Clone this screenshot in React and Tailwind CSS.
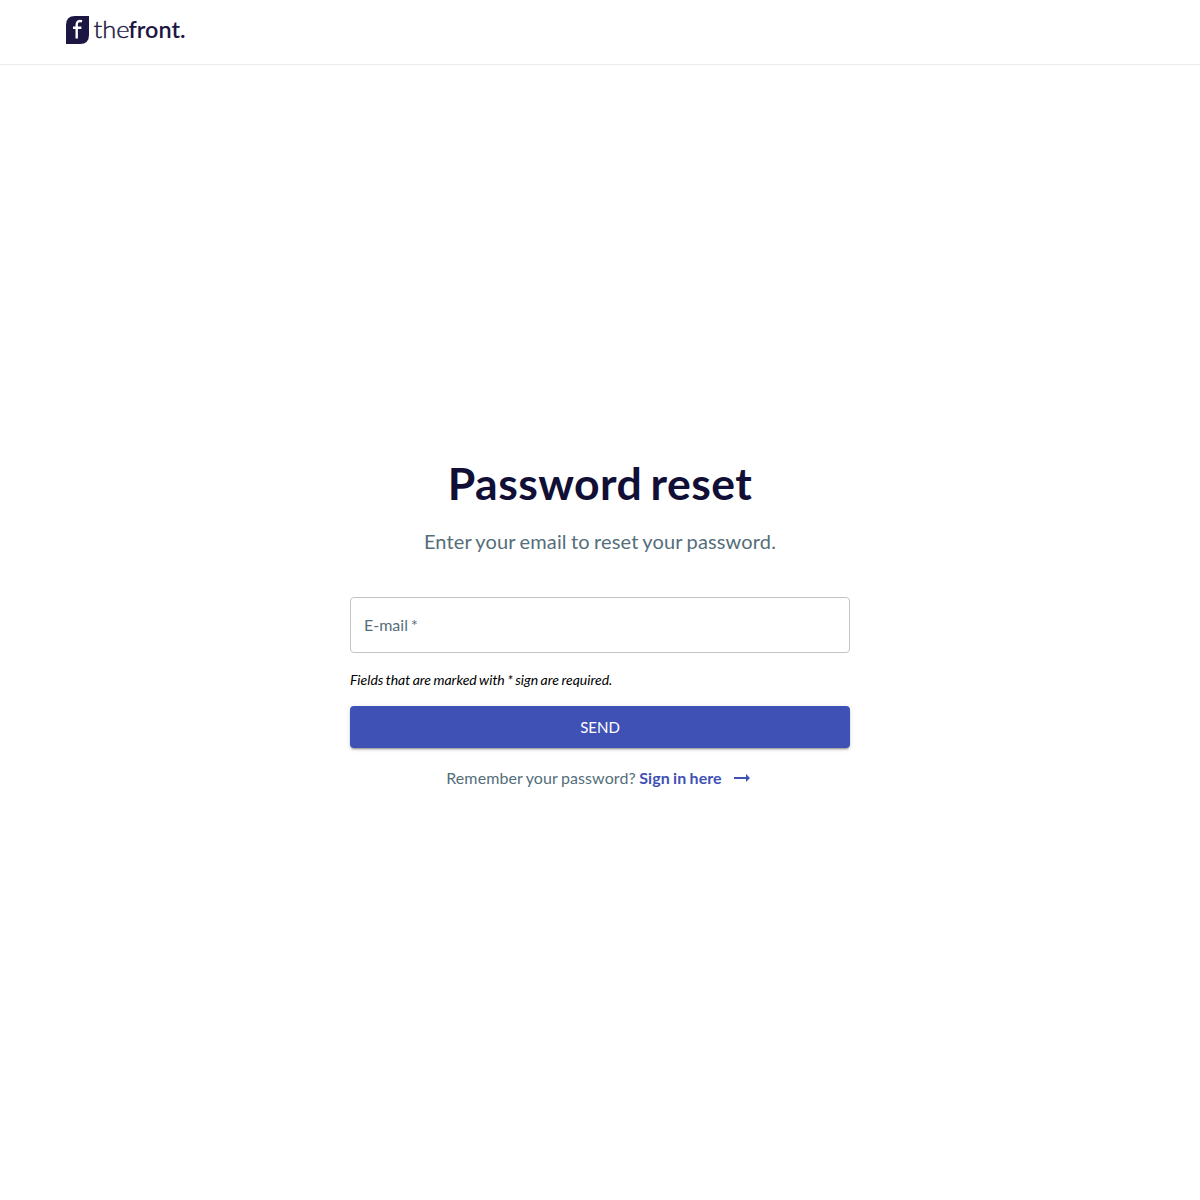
function Logo() {
  return (
    <svg className="block h-10 w-[126px] overflow-visible" viewBox="0 -6 126 40" fill="none" aria-label="thefront.">
      <path d="M9 0H23V19Q23 28 14 28H0V9Q0 0 9 0Z" fill="#1b1642" />
      <path d="M16 5.3C12.6 4.3 10.7 5.7 10.7 8.8V22.5M7 11.8H15.4" stroke="#fff" strokeWidth="2.4" />
      <g fill="#1b1642" fontFamily="Lato, sans-serif" fontSize="23.5">
        <text x="27.5" y="22" fontWeight="300" stroke="#1b1642" strokeWidth="0.4" textLength="36" lengthAdjust="spacingAndGlyphs">the</text>
        <text x="62.5" y="22" fontWeight="600" textLength="57" lengthAdjust="spacingAndGlyphs">front.</text>
      </g>
    </svg>
  );
}

export default function App() {
  return (
    <div className="min-h-screen bg-white font-['Lato',sans-serif] text-[#546e7a]">
      <header className="flex h-[65px] items-start border-b border-[#ebebeb] px-[66px] pt-2.5">
        <a href="#"><Logo /></a>
      </header>
      <main className="mx-auto w-[500px] pt-[392px]">
        <h1 className="text-center text-[44.56px] leading-[52px] font-bold tracking-[0.45px] [word-spacing:-3px] text-[#110f36]">Password reset</h1>
        <p className="mt-4 text-center text-xl leading-8 tracking-[0.0075em] [word-spacing:-1px]">Enter your email to reset your password.</p>
        <form className="mt-10" onSubmit={(e) => e.preventDefault()}>
          <input
            type="email"
            aria-label="E-mail"
            placeholder="E-mail *"
            className="block h-14 w-full rounded border border-[#c4c4c4] px-[13px] pb-0.5 text-base [word-spacing:-1px] outline-none placeholder:text-[#546e7a]"
          />
          <p className="mt-4 text-sm leading-[22px] text-black italic [word-spacing:-0.85px]">
            Fields that are marked with * sign are required.
          </p>
          <button
            type="submit"
            className="mt-[15px] flex h-[42px] w-full items-center justify-center rounded bg-[#3f51b5] text-[15px] text-white shadow-[0px_3px_1px_-2px_rgba(0,0,0,0.2),0px_2px_2px_0px_rgba(0,0,0,0.14),0px_1px_5px_0px_rgba(0,0,0,0.12)]"
          >
            SEND
          </button>
        </form>
        <div className="mt-[6px] flex h-12 items-center justify-center text-base tracking-[0.1px] [word-spacing:-0.8px]">
          <span>Remember your password?&nbsp;</span>
          <a href="#" className="flex items-center font-bold text-[#3f51b5]">
            Sign in here
            <svg className="ml-2 h-6 w-6" viewBox="0 0 24 24" fill="currentColor">
              <path d="M16.01 11H4v2h12.01v3L20 12l-3.99-4z" />
            </svg>
          </a>
        </div>
      </main>
    </div>
  );
}
